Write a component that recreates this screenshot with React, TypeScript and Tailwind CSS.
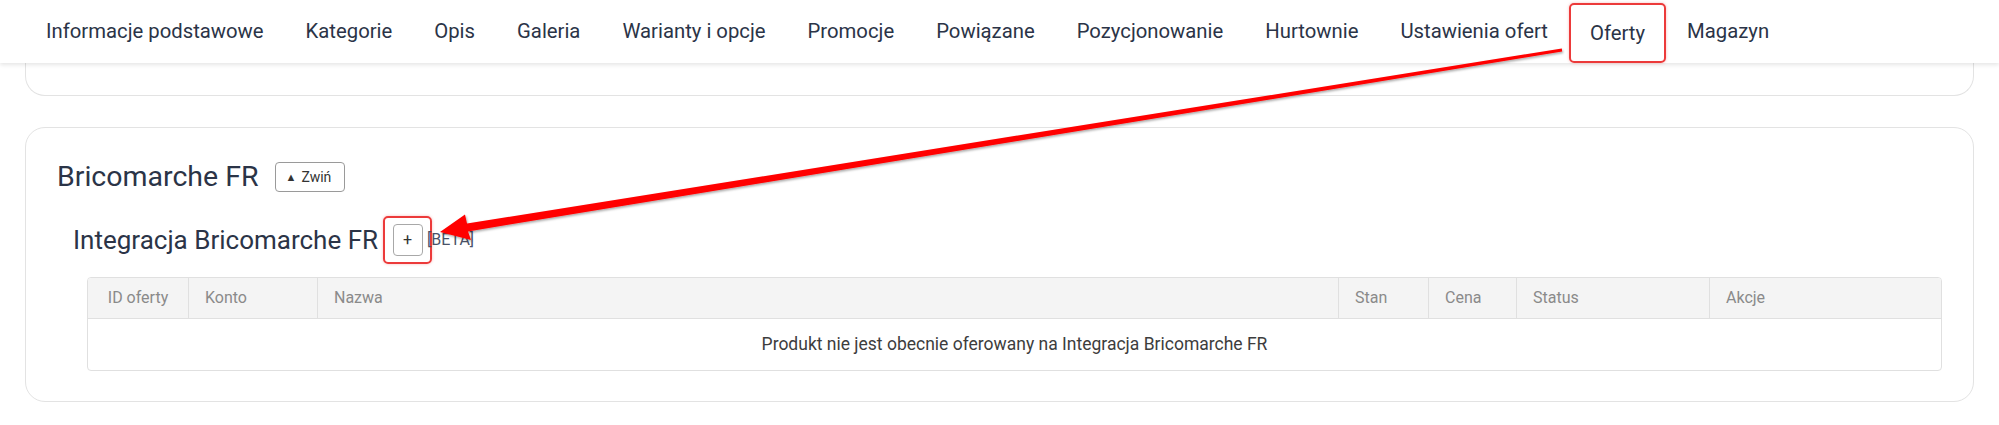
import React from 'react';

const tabs = [
  'Informacje podstawowe', 'Kategorie', 'Opis', 'Galeria', 'Warianty i opcje', 'Promocje',
  'Powiązane', 'Pozycjonowanie', 'Hurtownie', 'Ustawienia ofert', 'Oferty', 'Magazyn',
];

const columns = ['ID oferty', 'Konto', 'Nazwa', 'Stan', 'Cena', 'Status', 'Akcje'];

export default function App() {
  return (
    <div className="relative w-[1999px] h-[425px] bg-white overflow-hidden font-['Roboto',sans-serif]">
      {/* Top tabs */}
      <nav className="relative z-10 flex h-[63px] bg-white pl-[25px] shadow-[0_2px_4px_rgba(0,0,0,0.10)]">
        {tabs.map(t => (
          t === 'Oferty' ? (
            <div key={t}
              className="flex items-center mt-[3px] px-[19px] border-2 border-[#ec3a3a] rounded-[5px] text-[20.3px] text-[#2b3447] shadow-[0_0_3px_rgba(236,58,58,0.35)]">
              {t}
            </div>
          ) : (
            <div key={t} className="flex items-center px-[21px] text-[20.3px] text-[#2b3447]">{t}</div>
          )
        ))}
      </nav>

      <div className="px-[25px]">
        {/* previous card (only its bottom visible) */}
        <div className="w-[1949px] h-[33px] border border-t-0 border-[#e3e3e3] rounded-b-[20px]" />

        {/* Bricomarche card */}
        <div className="w-[1949px] h-[275px] mt-[31px] border border-[#e3e3e3] rounded-[20px] px-[31px] pt-[34px]">
          <div className="flex items-center h-[30px]">
            <h2 className="text-[28.5px] text-[#2b3447] leading-none">Bricomarche FR</h2>
            <button className="ml-[16px] flex items-center gap-[5px] h-[30px] w-[70px] pl-[10px] border border-[#9a9a9a] rounded-[4px] text-[14px] text-[#333]">
              <span className="text-[11px] leading-none">▲</span>
              <span>Zwiń</span>
            </button>
          </div>

          <div className="flex items-center h-[32px] mt-[32px] pl-[16px]">
            <h3 className="text-[26px] text-[#2b3447] leading-none">Integracja Bricomarche FR</h3>
            <div className="ml-[5px] flex items-center justify-center w-[49px] h-[48px] border-2 border-[#ec3a3a] rounded-[5px] shadow-[0_0_3px_rgba(236,58,58,0.35)]">
              <button className="flex items-center justify-center w-[30px] h-[32px] border border-[#a8a8a8] rounded-[4px] text-[16px] text-[#333] bg-white">+</button>
            </div>
            <span className="-ml-[5px] text-[16px] text-[#4a5268]">[BETA]</span>
          </div>

          <div className="ml-[30px] mt-[21px] border border-[#e0e0e0] rounded-[4px] overflow-hidden">
            <div className="grid grid-cols-[101px_129px_1fr_90px_88px_193px_231px] h-[41px] bg-[#f4f4f4] border-b border-[#e0e0e0] text-[16px] text-[#8a8a8a]">
              {columns.map((c, i) => (
                <div key={c}
                  className={`flex items-center ${i === 0 ? 'justify-center' : 'pl-[16px]'} ${i < columns.length - 1 ? 'border-r border-[#e0e0e0]' : ''}`}>
                  {c}
                </div>
              ))}
            </div>
            <div className="flex items-center justify-center h-[51px] text-[17.5px] text-[#3d3d3d]">
              Produkt nie jest obecnie oferowany na Integracja Bricomarche FR
            </div>
          </div>
        </div>
      </div>

      {/* annotation arrow */}
      <svg className="absolute left-0 top-0 z-20 pointer-events-none" width="1999" height="425" viewBox="0 0 1999 425">
        <defs>
          <filter id="sh" x="-5%" y="-20%" width="110%" height="140%">
            <feDropShadow dx="1" dy="1.5" stdDeviation="1.2" floodColor="#000" floodOpacity="0.35" />
          </filter>
        </defs>
        <polygon
          filter="url(#sh)"
          fill="#ff0000"
          points="440,232 471,240 468,231.4 1562.2,51.5 1561.8,48.5 467,223.6 465,214.5 440,232"
        />
      </svg>
    </div>
  );
}
